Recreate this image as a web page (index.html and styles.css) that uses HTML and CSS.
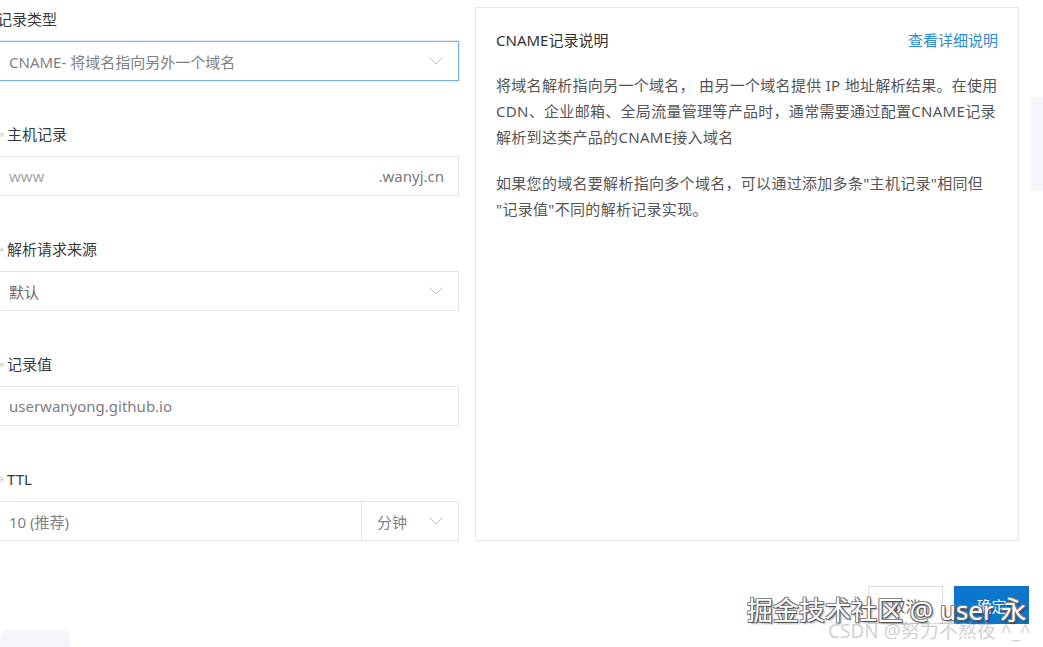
FILE: index.html
```html
<!DOCTYPE html>
<html lang="zh-CN">
<head>
  <meta charset="UTF-8">
  <meta name="viewport" content="width=device-width, initial-scale=1.0">
  <title>添加记录</title>
  <link rel="stylesheet" href="styles.css">
</head>
<body>
  <div class="page">
    <div class="form">
      <div class="form-item">
        <div class="form-label plain">记录类型</div>
        <div class="field field-focus">
          <span class="field-text">CNAME- 将域名指向另外一个域名</span>
          <svg class="chevron" width="14" height="8" viewBox="0 0 14 8"><polyline points="0.5,0.5 7,7 13.5,0.5" fill="none" stroke="#c4c4c4" stroke-width="1"/></svg>
        </div>
      </div>
      <div class="form-item">
        <div class="form-label"><span class="star">*</span>主机记录</div>
        <div class="field">
          <span class="field-text placeholder">www</span>
          <span class="suffix">.wanyj.cn</span>
        </div>
      </div>
      <div class="form-item">
        <div class="form-label"><span class="star">*</span>解析请求来源</div>
        <div class="field">
          <span class="field-text dark">默认</span>
          <svg class="chevron" width="14" height="8" viewBox="0 0 14 8"><polyline points="0.5,0.5 7,7 13.5,0.5" fill="none" stroke="#c4c4c4" stroke-width="1"/></svg>
        </div>
      </div>
      <div class="form-item">
        <div class="form-label"><span class="star">*</span>记录值</div>
        <div class="field">
          <span class="field-text">userwanyong.github.io</span>
        </div>
      </div>
      <div class="form-item">
        <div class="form-label"><span class="star">*</span>TTL</div>
        <div class="field-group">
          <div class="field grow">
            <span class="field-text">10 (推荐)</span>
          </div>
          <div class="field unit">
            <span class="field-text">分钟</span>
            <svg class="chevron" width="14" height="8" viewBox="0 0 14 8"><polyline points="0.5,0.5 7,7 13.5,0.5" fill="none" stroke="#c4c4c4" stroke-width="1"/></svg>
          </div>
        </div>
      </div>
    </div>

    <div class="help">
      <div class="help-head">
        <span class="help-title">CNAME记录说明</span>
        <a class="help-link" href="#">查看详细说明</a>
      </div>
      <p>将域名解析指向另一个域名， 由另一个域名提供 IP 地址解析结果。在使用<br>CDN、企业邮箱、全局流量管理等产品时，通常需要通过配置CNAME记录<br>解析到这类产品的CNAME接入域名</p>
      <p>如果您的域名要解析指向多个域名，可以通过添加多条"主机记录"相同但<br>"记录值"不同的解析记录实现。</p>
    </div>
  </div>

  <div class="footer">
    <button class="btn">取消</button>
    <button class="btn btn-primary">确定</button>
  </div>

  <div class="shade shade-right"></div>
  <div class="shade shade-left"></div>
  <div class="mark mark-juejin">掘金技术社区 @ user 永</div>
  <div class="mark mark-csdn">CSDN @努力不熬夜 ^_^</div>
</body>
</html>
```

FILE: styles.css
```css
*{
  box-sizing: border-box;
}
body{
  margin: 0;
  width: 1043px;
  height: 647px;
  overflow: hidden;
  background: #fff;
  font-family: "Noto Sans", "Noto Sans CJK SC", sans-serif;
  font-size: 15px;
  color: #333;
  position: relative;
}
.page{
  display: flex;
  gap: 16px;
  align-items: stretch;
}
.form{
  width: 460px;
  margin-left: -1px;
  padding-top: 9px;
  display: flex;
  flex-direction: column;
  gap: 43px;
}
.form-label{
  height: 20px;
  line-height: 20px;
  margin-bottom: 12px;
  color: #3a3a3a;
  white-space: nowrap;
}
.form-label.plain{
  margin-left: -2px;
}
.star{
  display: inline-block;
  width: 8px;
  color: #d0d0d0;
  font-size: 10px;
}
.field{
  height: 40px;
  border: 1px solid #e3e3e3;
  display: flex;
  align-items: center;
  justify-content: space-between;
  padding: 0 15px 0 9px;
  background: #fff;
}
.field-focus{
  border-color: #7ab6e3;
  box-shadow: 0 0 0 1px rgba(122, 182, 227, 0.25);
}
.field-text{
  color: #808080;
  white-space: nowrap;
}
.field-text.placeholder{
  color: #a6a6a6;
}
.field-text.dark{
  color: #666;
}
.suffix{
  color: #7a7a7a;
  margin-right: -1px;
}
.chevron{
  display: block;
}
.field-group{
  display: flex;
}
.field.grow{
  flex: 1;
  border-right: 0;
}
.field.unit{
  width: 98px;
  padding-left: 15px;
}
.help{
  width: 544px;
  margin-top: 7px;
  border: 1px solid #e9e9e9;
  padding: 22px 20px 0 20px;
}
.help-head{
  display: flex;
  justify-content: space-between;
  height: 20px;
  line-height: 20px;
  margin-bottom: 22px;
}
.help-title{
  color: #333;
}
.help-link{
  color: #2b8bd3;
  text-decoration: none;
}
.help p{
  margin: 0 0 20px 0;
  line-height: 26px;
  color: #555;
  letter-spacing: 0.3px;
  white-space: nowrap;
}
.footer{
  display: flex;
  justify-content: flex-end;
  gap: 11px;
  margin-top: 45px;
  padding-right: 14px;
}
.btn{
  width: 75px;
  height: 38px;
  border: 1px solid #dcdcdc;
  background: #fff;
  color: #666;
  font-family: inherit;
  font-size: 15px;
  padding: 0;
}
.btn-primary{
  background: #0b76cc;
  border-color: #0b76cc;
  color: #fff;
}
.shade{
  position: absolute;
  background: #f6f4fb;
}
.shade-right{
  left: 1031px;
  top: 97px;
  width: 12px;
  height: 94px;
}
.shade-left{
  left: 0;
  top: 630px;
  width: 70px;
  height: 24px;
  border-radius: 6px;
}
.mark{
  position: absolute;
  white-space: nowrap;
  pointer-events: none;
}
.mark-juejin{
  left: 747px;
  top: 593px;
  font-size: 26px;
  line-height: 34px;
  color: #fff;
  text-shadow: 1px 1px 0 #555, -1px -1px 0 #888, 1px -1px 0 #777, -1px 1px 0 #777, 2px 2px 2px rgba(0, 0, 0, 0.35);
}
.mark-csdn{
  left: 828px;
  top: 619px;
  font-size: 19px;
  line-height: 24px;
  color: rgba(170, 170, 170, 0.55);
}
```
